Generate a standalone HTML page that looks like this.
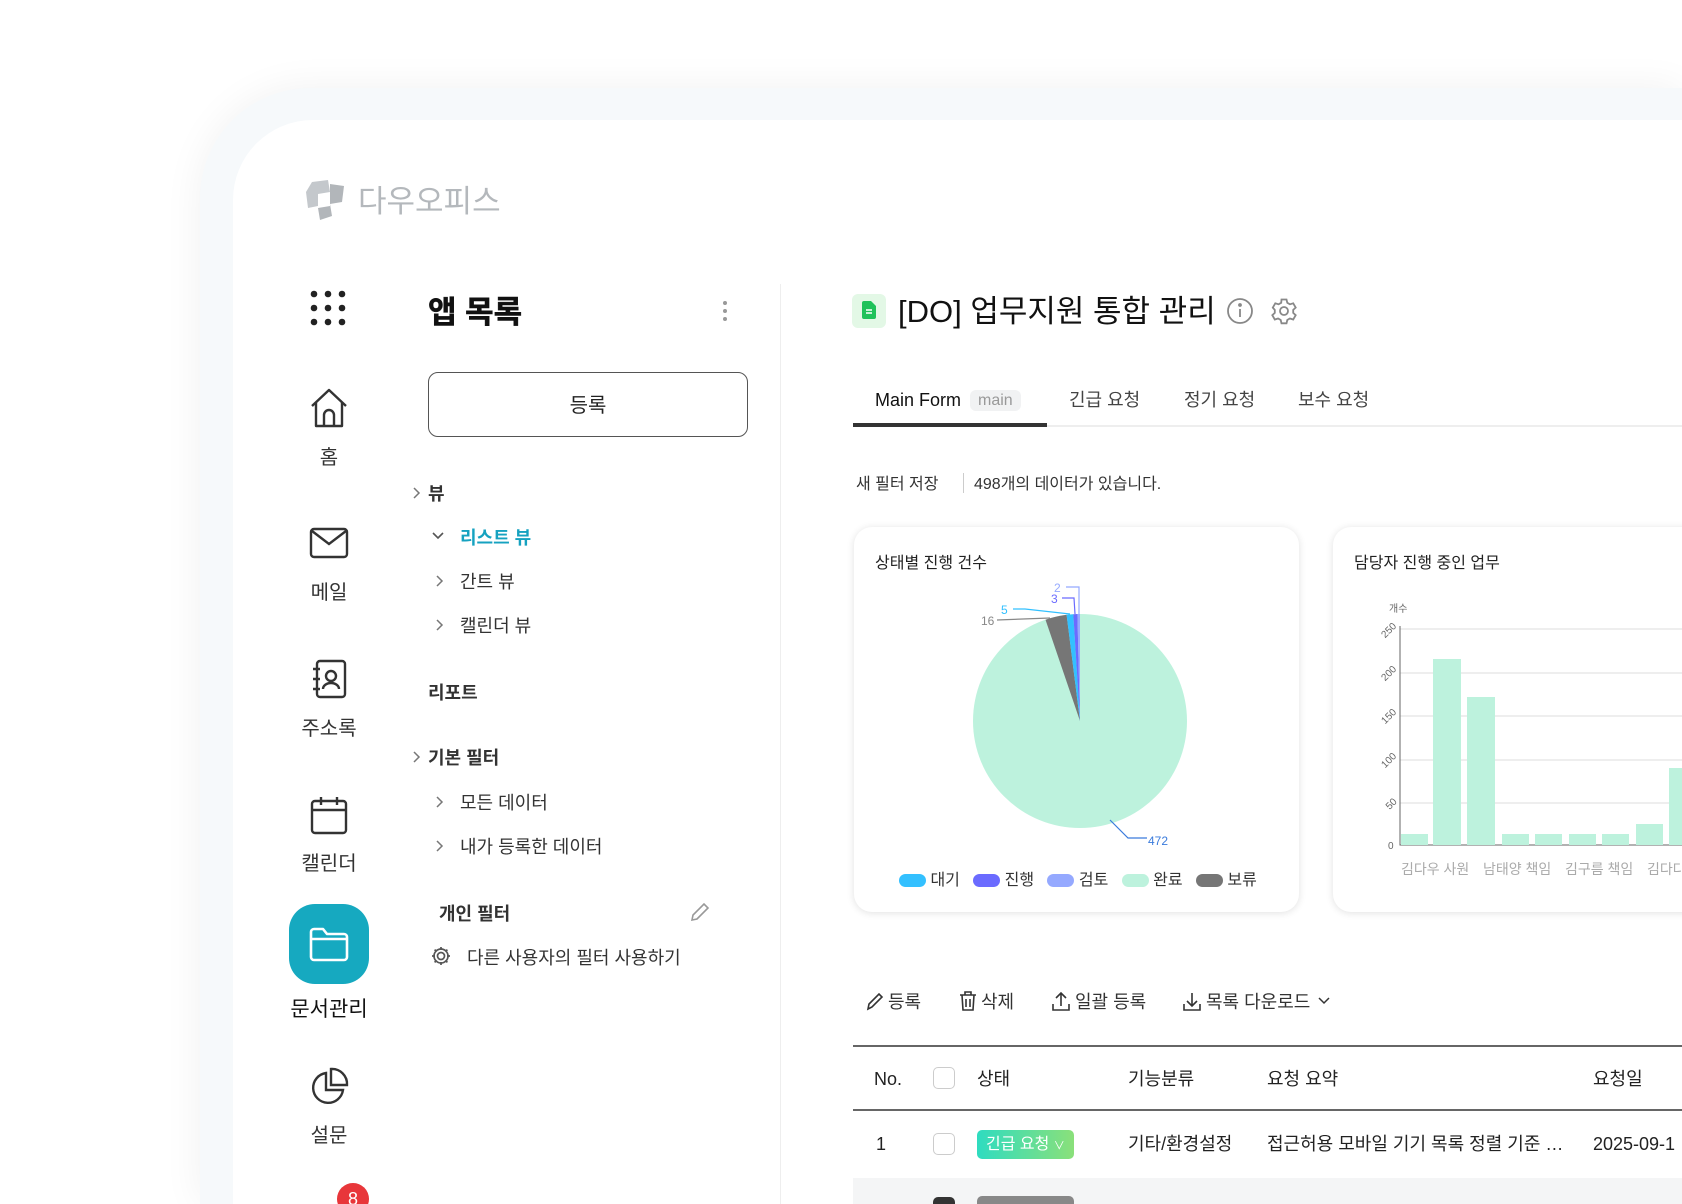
<!DOCTYPE html>
<html><head><meta charset="utf-8"><style>
*{margin:0;padding:0;box-sizing:border-box}
html,body{width:1682px;height:1204px;overflow:hidden}
body{background:#fff;font-family:"Liberation Sans","Noto Sans CJK KR",sans-serif;color:#222}
#w{position:relative;width:1682px;height:1204px;overflow:hidden}
.a{position:absolute;white-space:nowrap;line-height:1.2}
.t{margin-top:3px}
.frame{position:absolute;left:200px;top:88px;width:1482px;height:1116px;background:#f6f9fb;border-radius:110px 0 0 0;box-shadow:0 0 40px rgba(0,0,0,0.06)}
.panel{position:absolute;left:233px;top:120px;width:1449px;height:1084px;background:#fff;border-radius:80px 0 0 0}
.lbl{font-size:20px;color:#333;text-align:center;width:120px;left:269px;margin-top:3px}
.tree{font-size:18px;color:#333;margin-top:3px}
svg{position:absolute}
.card{position:absolute;background:#fff;border-radius:18px;box-shadow:0 1px 8px rgba(0,0,0,0.12)}
.th{font-size:18px;color:#222;top:1069px}
.td{font-size:18px;color:#222;top:1134px}
</style></head><body><div id="w">
<div class="frame"></div>
<div class="panel"></div>

<svg style="left:304px;top:178px" width="42" height="44" viewBox="0 0 42 44"><path d="M8 4 L24 2 L26 14 L14 16 L14 28 L4 30 L2 14Z" fill="#c4c8cc"/><path d="M26 6 L40 8 L38 24 L26 26 L28 38 L16 42 L14 30 L26 28Z" fill="#b2b6ba"/></svg>
<div class="a" style="left:358px;top:183px;font-size:31px;color:#b4b8bc">다우오피스</div>

<svg style="left:310px;top:290px" width="36" height="36"><g fill="#222"><circle cx="4" cy="4" r="3.3"/><circle cx="18" cy="4" r="3.3"/><circle cx="32" cy="4" r="3.3"/><circle cx="4" cy="18" r="3.3"/><circle cx="18" cy="18" r="3.3"/><circle cx="32" cy="18" r="3.3"/><circle cx="4" cy="32" r="3.3"/><circle cx="18" cy="32" r="3.3"/><circle cx="32" cy="32" r="3.3"/></g></svg>
<svg style="left:309px;top:387px" width="40" height="42" viewBox="0 0 40 42" fill="none" stroke="#333" stroke-width="2.4" stroke-linejoin="round"><path d="M3 19 L20 3 L37 19"/><path d="M7 15 V39 H33 V15"/><path d="M15 39 V28 a5 5 0 0 1 10 0 V39"/></svg>
<div class="a lbl" style="top:443px">홈</div>
<svg style="left:309px;top:527px" width="40" height="32" fill="none" stroke="#333" stroke-width="2.4"><rect x="2" y="2" width="36" height="28" rx="3"/><path d="M3 4 L20 17 L37 4"/></svg>
<div class="a lbl" style="top:578px">메일</div>
<svg style="left:311px;top:659px" width="38" height="40" fill="none" stroke="#333" stroke-width="2.4"><rect x="6" y="2" width="28" height="36" rx="3"/><circle cx="20" cy="17" r="5"/><path d="M12 30 a8 6 0 0 1 16 0"/><path d="M2 10h7M2 20h7M2 30h7"/></svg>
<div class="a lbl" style="top:714px">주소록</div>
<svg style="left:310px;top:795px" width="38" height="40" fill="none" stroke="#333" stroke-width="2.4"><rect x="2" y="6" width="34" height="32" rx="3"/><path d="M2 15h34M11 2v8M27 2v8"/></svg>
<div class="a lbl" style="top:849px">캘린더</div>
<div class="a" style="left:289px;top:904px;width:80px;height:80px;border-radius:26px;background:#16a9c0"></div>
<svg style="left:308px;top:926px" width="42" height="36" fill="none" stroke="#fff" stroke-width="2.6" stroke-linejoin="round"><path d="M3 6 a3 3 0 0 1 3-3 H15 L19 8 H36 a3 3 0 0 1 3 3 V31 a3 3 0 0 1-3 3 H6 a3 3 0 0 1-3-3Z"/><path d="M3 13 H39"/></svg>
<div class="a lbl" style="top:994px;color:#111;font-size:21px">문서관리</div>
<svg style="left:309px;top:1067px" width="40" height="40" fill="none" stroke="#333" stroke-width="2.4"><path d="M17 6 A15 15 0 1 0 34 23 H17Z"/><path d="M22 2 A15 15 0 0 1 38 18 H22Z"/></svg>
<div class="a lbl" style="top:1121px">설문</div>
<div class="a" style="left:337px;top:1183px;width:32px;height:32px;border-radius:16px;background:#e8363a;color:#fff;font-size:18px;text-align:center;line-height:32px">8</div>

<div class="a" style="left:428px;top:294px;font-size:31px;font-weight:bold;color:#111;-webkit-text-stroke:0.5px #111">앱 목록</div>
<svg style="left:722px;top:300px" width="6" height="24"><g fill="#999"><circle cx="3" cy="3" r="2"/><circle cx="3" cy="11" r="2"/><circle cx="3" cy="19" r="2"/></g></svg>
<div class="a" style="left:428px;top:372px;width:320px;height:65px;border:1.5px solid #555;border-radius:10px;text-align:center;line-height:66px;font-size:20px">등록</div>
<div class="a" style="left:780px;top:284px;width:1px;height:940px;background:#eee"></div>

<svg style="left:411px;top:486px" width="10" height="14" fill="none" stroke="#777" stroke-width="1.5"><path d="M3 2l5 5-5 5"/></svg>
<div class="a tree" style="left:428px;top:481px;font-weight:bold">뷰</div>
<svg style="left:431px;top:531px" width="14" height="10" fill="none" stroke="#555" stroke-width="1.6"><path d="M2 2l5 5 5-5"/></svg>
<div class="a tree" style="left:460px;top:525px;color:#16a2c0;font-weight:bold">리스트 뷰</div>
<svg style="left:434px;top:574px" width="10" height="14" fill="none" stroke="#777" stroke-width="1.5"><path d="M3 2l5 5-5 5"/></svg>
<div class="a tree" style="left:460px;top:569px">간트 뷰</div>
<svg style="left:434px;top:618px" width="10" height="14" fill="none" stroke="#777" stroke-width="1.5"><path d="M3 2l5 5-5 5"/></svg>
<div class="a tree" style="left:460px;top:613px">캘린더 뷰</div>
<div class="a tree" style="left:428px;top:680px;font-weight:bold">리포트</div>
<svg style="left:411px;top:750px" width="10" height="14" fill="none" stroke="#777" stroke-width="1.5"><path d="M3 2l5 5-5 5"/></svg>
<div class="a tree" style="left:428px;top:745px;font-weight:bold">기본 필터</div>
<svg style="left:434px;top:795px" width="10" height="14" fill="none" stroke="#777" stroke-width="1.5"><path d="M3 2l5 5-5 5"/></svg>
<div class="a tree" style="left:460px;top:790px">모든 데이터</div>
<svg style="left:434px;top:839px" width="10" height="14" fill="none" stroke="#777" stroke-width="1.5"><path d="M3 2l5 5-5 5"/></svg>
<div class="a tree" style="left:460px;top:834px">내가 등록한 데이터</div>
<div class="a tree" style="left:439px;top:901px;font-weight:bold">개인 필터</div>
<svg style="left:689px;top:901px" width="22" height="22" fill="none" stroke="#999" stroke-width="1.6"><path d="M3 19 L4 14 L15 3 L19 7 L8 18Z"/></svg>
<svg style="left:430px;top:945px" width="22" height="22" fill="none" stroke="#555" stroke-width="1.7"><circle cx="11" cy="11" r="3.5"/><path d="M11 2v3M11 17v3M2 11h3M17 11h3M4.6 4.6l2.1 2.1M15.3 15.3l2.1 2.1M4.6 17.4l2.1-2.1M15.3 6.7l2.1-2.1"/><circle cx="11" cy="11" r="7"/></svg>
<div class="a tree" style="left:467px;top:945px">다른 사용자의 필터 사용하기</div>

<div class="a" style="left:852px;top:294px;width:34px;height:34px;border-radius:6px;background:#e3f8e6"></div>
<svg style="left:862px;top:301px" width="14" height="18"><path d="M0 2a2 2 0 0 1 2-2h7l5 5v11a2 2 0 0 1-2 2H2a2 2 0 0 1-2-2Z" fill="#1fc25a"/><path d="M4 9h6M4 12h6" stroke="#fff" stroke-width="1.4"/></svg>
<div class="a" style="left:898px;top:293px;font-size:31px;color:#111">[DO] 업무지원 통합 관리</div>
<svg style="left:1226px;top:297px" width="28" height="28" fill="none" stroke="#888" stroke-width="1.8"><circle cx="14" cy="14" r="12"/><path d="M14 12v8"/><circle cx="14" cy="8" r="1" fill="#888"/></svg>
<svg style="left:1270px;top:297px" width="28" height="28" viewBox="0 0 28 28" fill="none" stroke="#888" stroke-width="1.8"><circle cx="14" cy="14" r="4"/><path d="M11.5 2.5h5l.8 3.3 2.6 1.5 3.3-1 2.5 4.3-2.5 2.3v3l2.5 2.3-2.5 4.3-3.3-1-2.6 1.5-.8 3.3h-5l-.8-3.3-2.6-1.5-3.3 1-2.5-4.3 2.5-2.3v-3L2.8 10.6l2.5-4.3 3.3 1 2.6-1.5Z"/></svg>

<div class="a" style="left:875px;top:390px;font-size:18px;color:#111">Main Form</div>
<div class="a" style="left:970px;top:390px;padding:1px 8px;border-radius:6px;background:#f1f2f3;color:#999;font-size:16px">main</div>
<div class="a" style="left:1069px;top:390px;font-size:18px;color:#444">긴급 요청</div>
<div class="a" style="left:1184px;top:390px;font-size:18px;color:#444">정기 요청</div>
<div class="a" style="left:1298px;top:390px;font-size:18px;color:#444">보수 요청</div>
<div class="a" style="left:853px;top:425px;width:900px;height:2px;background:#eee"></div>
<div class="a" style="left:853px;top:423px;width:194px;height:4px;background:#333"></div>

<div class="a" style="left:856px;top:475px;font-size:16px;color:#333">새 필터 저장</div>
<div class="a" style="left:963px;top:473px;width:1px;height:20px;background:#ccc"></div>
<div class="a" style="left:974px;top:475px;font-size:16px;color:#333">498개의 데이터가 있습니다.</div>

<div class="card" style="left:854px;top:527px;width:445px;height:385px"></div>
<div class="a" style="left:875px;top:554px;font-size:16px;color:#222">상태별 진행 건수</div>
<svg style="left:854px;top:527px" width="445" height="385" viewBox="854 527 445 385">
<circle cx="1080" cy="721" r="107" fill="#bdf2dd"/>
<path d="M1080 721 L1045.5 619.7 A107 107 0 0 1 1066.6 614.8Z" fill="#767676"/>
<path d="M1080 721 L1066.6 614.8 A107 107 0 0 1 1073.3 614.2Z" fill="#33c0ff"/>
<path d="M1080 721 L1073.3 614.2 A107 107 0 0 1 1077.4 614Z" fill="#6b6bff"/>
<path d="M1080 721 L1077.4 614 A107 107 0 0 1 1080 614Z" fill="#95a9ff"/>
<g fill="none" stroke-width="1.2">
<path d="M997 620 L1050 618" stroke="#888"/>
<path d="M1013 609 L1025 609 L1070 614" stroke="#33c0ff"/>
<path d="M1062 598 L1074 598 L1075 614" stroke="#6b6bff"/>
<path d="M1066 587 L1079 587 L1079 614" stroke="#95a9ff"/>
<path d="M1110 820 L1128 838 L1147 838" stroke="#3a7bdc"/>
</g>
<g font-size="12" font-family="Liberation Sans">
<text x="981" y="625" fill="#888">16</text><text x="1001" y="614" fill="#33c0ff">5</text>
<text x="1051" y="603" fill="#6b6bff">3</text><text x="1054" y="592" fill="#95a9ff">2</text>
<text x="1148" y="845" fill="#3a7bdc">472</text></g>
</svg>
<div class="a" style="left:899px;top:871px;font-size:16px;color:#333">
<span style="display:inline-block;width:27px;height:13px;border-radius:7px;background:#33c0ff;vertical-align:middle"></span> 대기&nbsp;&nbsp;
<span style="display:inline-block;width:27px;height:13px;border-radius:7px;background:#6b6bff;vertical-align:middle"></span> 진행&nbsp;&nbsp;
<span style="display:inline-block;width:27px;height:13px;border-radius:7px;background:#95a9ff;vertical-align:middle"></span> 검토&nbsp;&nbsp;
<span style="display:inline-block;width:27px;height:13px;border-radius:7px;background:#bdf2dd;vertical-align:middle"></span> 완료&nbsp;&nbsp;
<span style="display:inline-block;width:27px;height:13px;border-radius:7px;background:#767676;vertical-align:middle"></span> 보류</div>

<div class="card" style="left:1333px;top:527px;width:420px;height:385px"></div>
<div class="a" style="left:1354px;top:554px;font-size:16px;color:#222">담당자 진행 중인 업무</div>
<svg style="left:1333px;top:527px" width="349" height="385" viewBox="1333 527 349 385">
<g stroke="#ddd" stroke-width="1"><path d="M1400 629H1682M1400 673H1682M1400 716H1682M1400 760H1682M1400 803H1682"/></g>
<path d="M1400 626 V845 H1682" stroke="#666" fill="none"/>
<g fill="#bdf2dd">
<rect x="1401" y="834" width="27" height="11"/><rect x="1433" y="659" width="28" height="186"/><rect x="1467" y="697" width="28" height="148"/>
<rect x="1502" y="834" width="27" height="11"/><rect x="1535" y="834" width="27" height="11"/><rect x="1569" y="834" width="27" height="11"/><rect x="1602" y="834" width="27" height="11"/>
<rect x="1636" y="824" width="27" height="21"/><rect x="1669" y="768" width="20" height="77"/></g>
<g font-size="10" fill="#666" font-family="Liberation Sans">
<text x="1389" y="612">개수</text>
<text x="1380" y="634" transform="rotate(-45 1388 630)">250</text>
<text x="1380" y="677" transform="rotate(-45 1388 673)">200</text>
<text x="1380" y="720" transform="rotate(-45 1388 716)">150</text>
<text x="1380" y="764" transform="rotate(-45 1388 760)">100</text>
<text x="1385" y="807" transform="rotate(-45 1391 803)">50</text>
<text x="1388" y="849">0</text></g>
<g font-size="14" fill="#aaa" font-family="Liberation Sans,Noto Sans CJK KR"><text x="1401" y="874">김다우 사원</text><text x="1483" y="874">남태양 책임</text><text x="1565" y="874">김구름 책임</text><text x="1647" y="874">김다다</text></g>
</svg>

<svg style="left:866px;top:991px" width="18" height="20" fill="none" stroke="#333" stroke-width="1.6"><path d="M2 18 L3 13 L13 3 L16 6 L6 16Z"/></svg>
<div class="a" style="left:888px;top:992px;font-size:18px;color:#333">등록</div>
<svg style="left:959px;top:991px" width="18" height="20" fill="none" stroke="#333" stroke-width="1.6"><path d="M1 4h16M6 4V1h6v3M3 4l1 15h10l1-15M7 8v8M11 8v8"/></svg>
<div class="a" style="left:981px;top:992px;font-size:18px;color:#333">삭제</div>
<svg style="left:1052px;top:991px" width="18" height="20" fill="none" stroke="#333" stroke-width="1.6"><path d="M9 15V2M4 7l5-5 5 5M1 13v6h16v-6"/></svg>
<div class="a" style="left:1075px;top:992px;font-size:18px;color:#333">일괄 등록</div>
<svg style="left:1183px;top:991px" width="18" height="20" fill="none" stroke="#333" stroke-width="1.6"><path d="M9 2v13M4 10l5 5 5-5M1 13v6h16v-6"/></svg>
<div class="a" style="left:1206px;top:992px;font-size:18px;color:#333">목록 다운로드</div>
<svg style="left:1317px;top:996px" width="14" height="10" fill="none" stroke="#333" stroke-width="1.5"><path d="M2 2l5 5 5-5"/></svg>

<div class="a" style="left:853px;top:1045px;width:900px;height:2px;background:#666"></div>
<div class="a th" style="left:874px">No.</div>
<div class="a" style="left:933px;top:1067px;width:22px;height:22px;border:1.5px solid #ccc;border-radius:5px"></div>
<div class="a th" style="left:977px">상태</div>
<div class="a th" style="left:1128px">기능분류</div>
<div class="a th" style="left:1267px">요청 요약</div>
<div class="a th" style="left:1593px">요청일</div>
<div class="a" style="left:853px;top:1109px;width:900px;height:2px;background:#666"></div>
<div class="a td" style="left:876px">1</div>
<div class="a" style="left:933px;top:1133px;width:22px;height:22px;border:1.5px solid #ccc;border-radius:5px"></div>
<div class="a" style="left:977px;top:1130px;width:97px;height:29px;border-radius:5px;background:linear-gradient(90deg,#2fdcc0,#8ae07a);color:#fff;font-size:16px;line-height:30px;padding-left:9px">긴급 요청 <span style="font-size:11px">∨</span></div>
<div class="a td" style="left:1128px">기타/환경설정</div>
<div class="a td" style="left:1267px;width:305px;overflow:hidden;text-overflow:ellipsis">접근허용 모바일 기기 목록 정렬 기준 확인 필요</div>
<div class="a td" style="left:1593px">2025-09-1</div>
<div class="a" style="left:853px;top:1178px;width:829px;height:26px;background:#f4f5f6"></div>
<div class="a" style="left:933px;top:1197px;width:22px;height:7px;border-radius:5px 5px 0 0;background:#333"></div>
<div class="a" style="left:977px;top:1196px;width:97px;height:8px;border-radius:5px 5px 0 0;background:#888"></div>
</div></body></html>
